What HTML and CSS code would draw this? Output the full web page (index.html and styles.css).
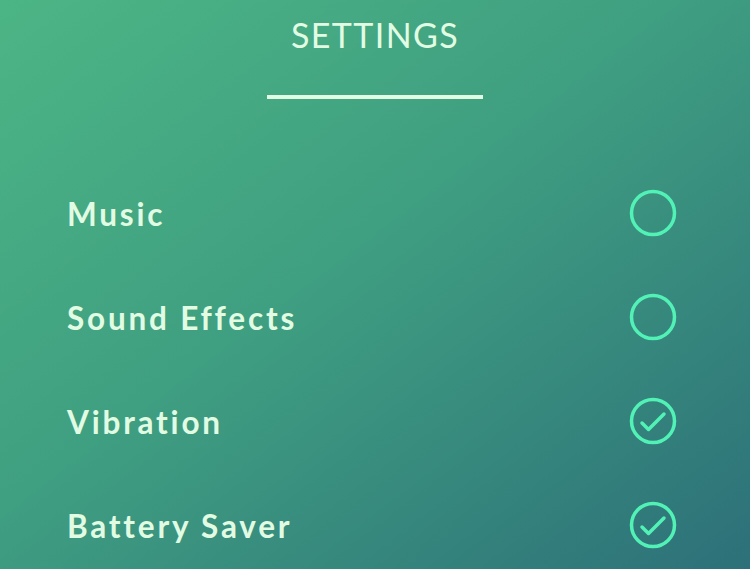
FILE: index.html
```html
<!DOCTYPE html>
<html lang="en">
<head>
<meta charset="utf-8">
<title>Settings</title>
<link rel="stylesheet" href="styles.css">
</head>
<body>
<main class="screen">
  <header class="header">
    <h1 class="title">SETTINGS</h1>
    <div class="rule"></div>
  </header>
  <ul class="options">
    <li class="option">
      <span class="label">Music</span>
      <svg class="toggle" viewBox="0 0 48 48"><circle cx="24" cy="24" r="21.5"/></svg>
    </li>
    <li class="option">
      <span class="label">Sound Effects</span>
      <svg class="toggle" viewBox="0 0 48 48"><circle cx="24" cy="24" r="21.5"/></svg>
    </li>
    <li class="option">
      <span class="label">Vibration</span>
      <svg class="toggle" viewBox="0 0 48 48"><circle cx="24" cy="24" r="21.5"/><path d="M13 26 L19.5 32.5 L35 17"/></svg>
    </li>
    <li class="option">
      <span class="label">Battery Saver</span>
      <svg class="toggle" viewBox="0 0 48 48"><circle cx="24" cy="24" r="21.5"/><path d="M13 26 L19.5 32.5 L35 17"/></svg>
    </li>
  </ul>
</main>
</body>
</html>
```
FILE: styles.css
```css
html, body {
  margin: 0;
  padding: 0;
}

body {
  width: 750px;
  height: 569px;
  overflow: hidden;
  font-family: Lato, "Open Sans", sans-serif;
}

.screen {
  width: 750px;
  height: 569px;
  box-sizing: border-box;
  background: linear-gradient(to bottom right, #4cb585 0%, #3f9f81 45%, #2d7079 100%);
  display: flex;
  flex-direction: column;
}

.header {
  display: flex;
  flex-direction: column;
  align-items: center;
  padding-top: 14px;
}

.title {
  margin: 0;
  font-weight: 400;
  font-size: 34px;
  line-height: normal;
  letter-spacing: 1.4px;
  color: #e2fce4;
}

.rule {
  margin-top: 40px;
  width: 216px;
  height: 4px;
  background: #e2fce4;
}

.options {
  list-style: none;
  margin: 62px 0 0;
  padding: 0 73px 0 67px;
}

.option {
  height: 104px;
  display: flex;
  align-items: center;
  justify-content: space-between;
}

.label {
  font-weight: 700;
  font-size: 31.5px;
  letter-spacing: 2.8px;
  color: #e2fce4;
  padding-top: 2px;
}

.toggle {
  width: 48px;
  height: 48px;
  fill: none;
  stroke: #52f2b6;
  stroke-width: 3.5;
  stroke-linecap: round;
  stroke-linejoin: round;
}
```
